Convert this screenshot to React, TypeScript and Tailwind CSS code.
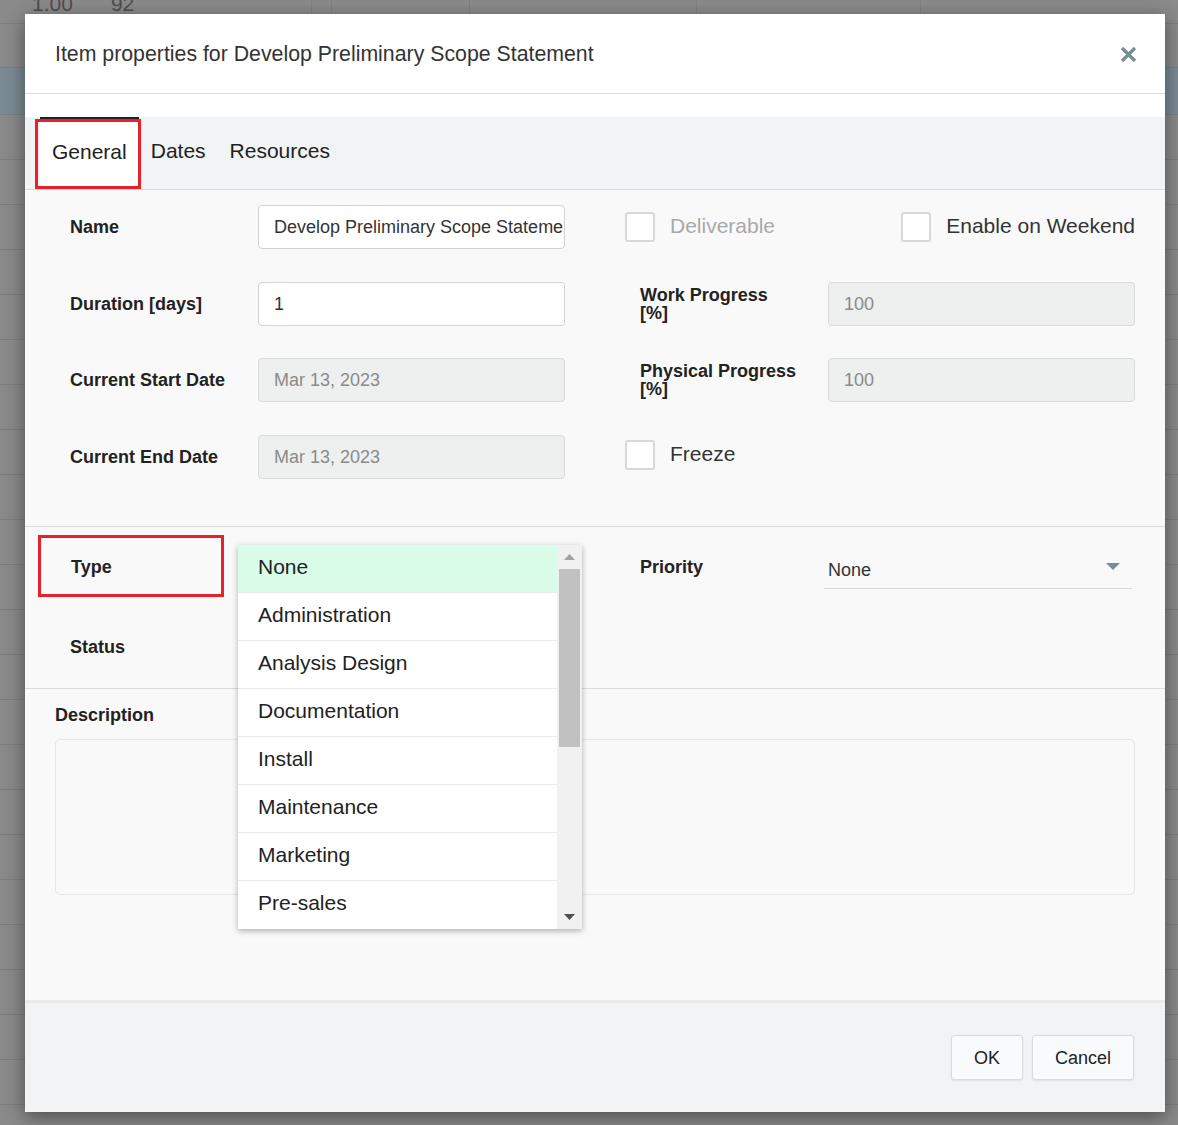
import React from "react";

const items = [
  "None",
  "Administration",
  "Analysis Design",
  "Documentation",
  "Install",
  "Maintenance",
  "Marketing",
  "Pre-sales",
];

function Checkbox() {
  return <span className="block w-[30px] h-[30px] border-2 border-[#d6d9dc] rounded-[3px] bg-white shrink-0" />;
}

function Label({ children }: { children: React.ReactNode }) {
  return <div className="w-[188px] shrink-0 text-[18px] leading-[18px] font-bold text-[#222]">{children}</div>;
}

function Input({ value, disabled }: { value: string; disabled?: boolean }) {
  return (
    <div
      className={
        disabled
          ? "w-[307px] h-[44px] shrink-0 rounded-[4px] border border-[#d8dadb] bg-[#eeefef] px-[15px] pt-[1px] flex items-center text-[18px] text-[#8a8a8a] whitespace-nowrap overflow-hidden"
          : "w-[307px] h-[44px] shrink-0 rounded-[4px] border border-[#cfd1d3] bg-white px-[15px] pt-[1px] flex items-center text-[18px] text-[#333] whitespace-nowrap overflow-hidden"
      }
    >
      {value}
    </div>
  );
}

function BgRow({ h, blue }: { h: string; blue?: boolean }) {
  return (
    <div className={`${h} ${blue ? "bg-[#7b8b94]" : ""} border-b border-[#7c7c7c] flex shrink-0`}>
      <div className="w-[312px] border-r border-[#7f7f7f]" />
      <div className="w-[20px] border-r border-[#7f7f7f]" />
      <div className="w-[138px] border-r border-[#7f7f7f]" />
      <div className="w-[227px] border-r border-[#7f7f7f]" />
      <div className="w-[224px] border-r border-[#7f7f7f]" />
      <div className="flex-1" />
    </div>
  );
}

export default function App() {
  return (
    <div className="relative w-[1178px] h-[1125px] overflow-hidden bg-[#8a8a8a] font-['Liberation_Sans',Arial,sans-serif]">
      {/* page behind the overlay */}
      <div className="flex flex-col">
        <div className="h-[24px] border-b border-[#7c7c7c] flex shrink-0">
          <div className="w-[312px] border-r border-[#7f7f7f] flex gap-[38px] pl-[32px] -mt-[8px] text-[21px] leading-[24px] text-[#4e4e4e]">
            <span>1.00</span>
            <span>92</span>
          </div>
          <div className="w-[20px] border-r border-[#7f7f7f]" />
          <div className="w-[138px] border-r border-[#7f7f7f]" />
          <div className="w-[227px] border-r border-[#7f7f7f]" />
          <div className="w-[224px] border-r border-[#7f7f7f]" />
          <div className="flex-1" />
        </div>
        <BgRow h="h-[44px]" />
        <BgRow h="h-[47px]" blue />
        {Array.from({ length: 22 }).map((_, i) => (
          <BgRow key={i} h="h-[45px]" />
        ))}
      </div>

      {/* modal */}
      <div className="absolute left-[25px] top-[14px] w-[1140px] h-[1098px] bg-white flex flex-col shadow-[0_5px_18px_rgba(0,0,0,0.45)]">
        {/* header */}
        <div className="h-[80px] shrink-0 border-b border-[#dcdcdc] flex items-center justify-between pl-[30px] pr-[28px]">
          <div className="text-[21.3px] text-[#333] pt-[3px]">Item properties for Develop Preliminary Scope Statement</div>
          <svg width="17" height="17" viewBox="0 0 17 17" className="mt-[1px]">
            <path d="M2 2 L15 15 M15 2 L2 15" stroke="#7b8c97" strokeWidth="3.2" strokeLinecap="butt" />
          </svg>
        </div>
        <div className="h-[23px] shrink-0 bg-white" />

        {/* tabs */}
        <div className="h-[73px] shrink-0 bg-[#f2f3f5] border-b border-[#d9dbdd] flex pl-[15px] text-[21px] text-[#222]">
          <div className="relative h-[72px] bg-white border-t-2 border-[#222] px-[12px] pb-[4px] flex items-center">
            General
            <span className="absolute left-[-5px] top-[0px] w-[106px] h-[70px] border-[3px] border-[#e8202a]" />
          </div>
          <div className="px-[12px] pb-[4px] flex items-center">Dates</div>
          <div className="px-[12px] pb-[4px] flex items-center">Resources</div>
        </div>

        {/* content */}
        <div className="flex-1 bg-[#f9f9f9] flex flex-col">
          {/* section 1 */}
          <div className="pl-[45px] pt-[15px] pb-[47.5px] border-b border-[#dcdcdc] flex flex-col gap-[32.5px]">
            <div className="flex items-center h-[44px]">
              <Label>Name</Label>
              <Input value="Develop Preliminary Scope Statement" />
              <div className="w-[60px] shrink-0" />
              <div className="w-[510px] flex items-center justify-between">
                <div className="flex items-center gap-[15px]">
                  <Checkbox />
                  <span className="text-[21px] text-[#a9a9a9] -mt-[2px]">Deliverable</span>
                </div>
                <div className="flex items-center gap-[15px]">
                  <Checkbox />
                  <span className="text-[21px] text-[#333] -mt-[2px]">Enable on Weekend</span>
                </div>
              </div>
            </div>
            <div className="flex items-center h-[44px]">
              <Label>Duration [days]</Label>
              <Input value="1" />
              <div className="w-[75px] shrink-0" />
              <Label>
                Work Progress
                <br />
                [%]
              </Label>
              <Input value="100" disabled />
            </div>
            <div className="flex items-center h-[44px]">
              <Label>Current Start Date</Label>
              <Input value="Mar 13, 2023" disabled />
              <div className="w-[75px] shrink-0" />
              <Label>
                Physical Progress
                <br />
                [%]
              </Label>
              <Input value="100" disabled />
            </div>
            <div className="flex items-center h-[44px]">
              <Label>Current End Date</Label>
              <Input value="Mar 13, 2023" disabled />
              <div className="w-[60px] shrink-0" />
              <div className="flex items-center gap-[15px] mt-[-3px]">
                <Checkbox />
                <span className="text-[21px] text-[#333] -mt-[2px]">Freeze</span>
              </div>
            </div>
          </div>

          {/* section 2 */}
          <div className="relative pl-[45px] pt-[18px] pb-[19px] border-b border-[#dcdcdc] flex flex-col gap-[36px]">
            <div className="flex items-center h-[44px]">
              <div className="relative">
                <Label>
                  <span className="pl-[1px]">Type</span>
                </Label>
                <span className="absolute left-[-32px] top-[-23px] w-[186px] h-[62px] border-[3px] border-[#e8202a]" />
              </div>
              <div className="w-[307px] shrink-0" />
              <div className="w-[75px] shrink-0" />
              <div className="w-[184px] shrink-0 text-[18px] font-bold text-[#222]">Priority</div>
              <div className="w-[308px] h-[44px] border-b border-[#d9d9d9] flex items-center justify-between pl-[4px] pr-[12px] pt-[8px]">
                <span className="text-[18px] text-[#333]">None</span>
                <svg width="14" height="8" viewBox="0 0 14 8" className="-mt-[8px]">
                  <path d="M0 0 L14 0 L7 7 Z" fill="#7b8c97" />
                </svg>
              </div>
            </div>
            <div className="flex items-center h-[44px]">
              <Label>Status</Label>
            </div>

            {/* open dropdown */}
            <div className="absolute left-[213px] top-[18px] w-[344px] h-[384px] bg-white flex shadow-[0_2px_6px_rgba(0,0,0,0.3)] z-10">
              <div className="w-[319px] flex flex-col">
                {items.map((it, i) => (
                  <div
                    key={it}
                    className={`h-[48px] shrink-0 flex items-center pl-[20px] pb-[4px] text-[21px] text-[#222] ${
                      i === 0 ? "bg-[#d9fde9]" : "bg-white"
                    } ${i < items.length - 1 ? "border-b border-[#ebebeb]" : ""}`}
                  >
                    {it}
                  </div>
                ))}
              </div>
              <div className="w-[25px] bg-[#f1f1f1] flex flex-col items-center">
                <div className="h-[24px] w-full flex items-center justify-center">
                  <svg width="11" height="6" viewBox="0 0 11 6">
                    <path d="M0 6 L11 6 L5.5 0 Z" fill="#a3a3a3" />
                  </svg>
                </div>
                <div className="h-[178px] w-[21px] bg-[#c1c1c1]" />
                <div className="flex-1" />
                <div className="h-[24px] w-full flex items-center justify-center">
                  <svg width="11" height="6" viewBox="0 0 11 6">
                    <path d="M0 0 L11 0 L5.5 6 Z" fill="#505050" />
                  </svg>
                </div>
              </div>
            </div>
          </div>

          {/* section 3 */}
          <div className="flex-1 px-[30px] pt-[16px] flex flex-col">
            <div className="text-[18px] leading-[20px] font-bold text-[#222]">Description</div>
            <div className="mt-[14px] h-[156px] rounded-[5px] border border-[#e6e6e6] bg-[#f9f9f9]" />
          </div>
        </div>

        {/* footer */}
        <div className="h-[112px] shrink-0 bg-[#f2f3f5] border-t-[3px] border-[#e9eaeb] flex items-center justify-end gap-[9px] pr-[31px]">
          <div className="w-[72px] h-[45px] rounded-[3px] border border-[#d9dadc] bg-[#f9fafb] shadow-[0_1px_2px_rgba(0,0,0,0.08)] flex items-center justify-center pt-[2px] text-[18px] text-[#222]">
            OK
          </div>
          <div className="w-[102px] h-[45px] rounded-[3px] border border-[#d9dadc] bg-[#f9fafb] shadow-[0_1px_2px_rgba(0,0,0,0.08)] flex items-center justify-center pt-[2px] text-[18px] text-[#222]">
            Cancel
          </div>
        </div>
      </div>
    </div>
  );
}
